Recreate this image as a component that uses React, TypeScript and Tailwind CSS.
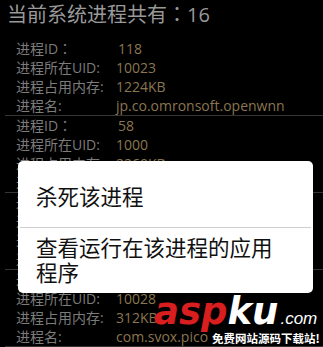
import React from "react";

type Proc = { id: string; uid: string; mem: string; name: string };

const procs: Proc[] = [
  { id: "118", uid: "10023", mem: "1224KB", name: "jp.co.omronsoft.openwnn" },
  { id: "58", uid: "1000", mem: "2260KB", name: "system" },
  { id: "97", uid: "10001", mem: "1876KB", name: "com.android.phone" },
  { id: "132", uid: "10028", mem: "312KB", name: "com.svox.pico" },
];

const font = { fontFamily: '"Open Sans", "Noto Sans CJK SC", sans-serif' };
const tc = { fontFamily: '"Noto Sans CJK TC", sans-serif' };

function Row({ label, colon, value, shift }: { label: string; colon: "full" | "half"; value: string; shift?: boolean }) {
  return (
    <div className="flex h-[19px] items-center leading-[19px] text-[14px] whitespace-nowrap">
      <span className="w-[100px] shrink-0 text-[#7c7c7c]">
        {label}
        {colon === "full" ? <span style={tc}>：</span> : ":"}
      </span>
      <span className={"text-[#8a7650] " + (shift ? "pl-[2px]" : "")}>{value}</span>
    </div>
  );
}

export default function App() {
  return (
    <div className="relative w-[323px] h-[347px] overflow-hidden bg-black" style={font}>
      <div className="h-[39px] pl-[7px] text-[20px] leading-[27px] text-[#999999] whitespace-nowrap">
        当前系统进程共有<span style={tc}>：</span>16
      </div>
      {procs.map((p, i) => (
        <div key={i} className="ml-[5px] border-b border-[#353535]">
          <div className="pl-[11px]">
            <Row label="进程ID" colon="full" value={p.id} shift />
            <Row label="进程所在UID" colon="half" value={p.uid} />
            <Row label="进程占用内存" colon="half" value={p.mem} />
            <Row label="进程名" colon="half" value={p.name} />
          </div>
        </div>
      ))}

      {/* Dialog */}
      <div className="absolute left-[18px] top-[161px] w-[295px] h-[132px] rounded-[5px] bg-white flex flex-col text-[#111111] text-[21.5px]">
        <div className="pl-[16px] pt-[23px] pb-[17px] leading-[26px] border-b border-[#cfcfcf] mx-[2px]">
          杀死该进程
        </div>
        <div className="pl-[18px] pr-[24px] pt-[7px] leading-[25px]">
          查看运行在该进程的应用程序
        </div>
      </div>

      {/* Watermark */}
      <div className="absolute left-[154px] top-[292px] flex items-baseline leading-[40px] whitespace-nowrap">
        <span
          className="text-[37px] font-bold italic text-[#d81e1e]"
          style={{ fontFamily: '"DejaVu Sans", sans-serif' }}
        >
          asp
        </span>
        <span
          className="text-[37px] font-bold italic text-white"
          style={{ fontFamily: '"DejaVu Sans", sans-serif' }}
        >
          ku
        </span>
        <span
          className="ml-[2px] text-[17px] italic text-white"
          style={{ fontFamily: '"Liberation Sans", Arial, sans-serif' }}
        >
          .com
        </span>
      </div>
      <div
        className="absolute left-[212px] top-[331px] text-[11.5px] leading-[14px] font-bold text-white whitespace-nowrap [text-shadow:0_0_2px_#000,0_0_1px_#000,1px_1px_1px_#000]"
        style={{ fontFamily: '"Noto Sans CJK SC", sans-serif' }}
      >
        免费网站源码下载站!
      </div>
    </div>
  );
}
